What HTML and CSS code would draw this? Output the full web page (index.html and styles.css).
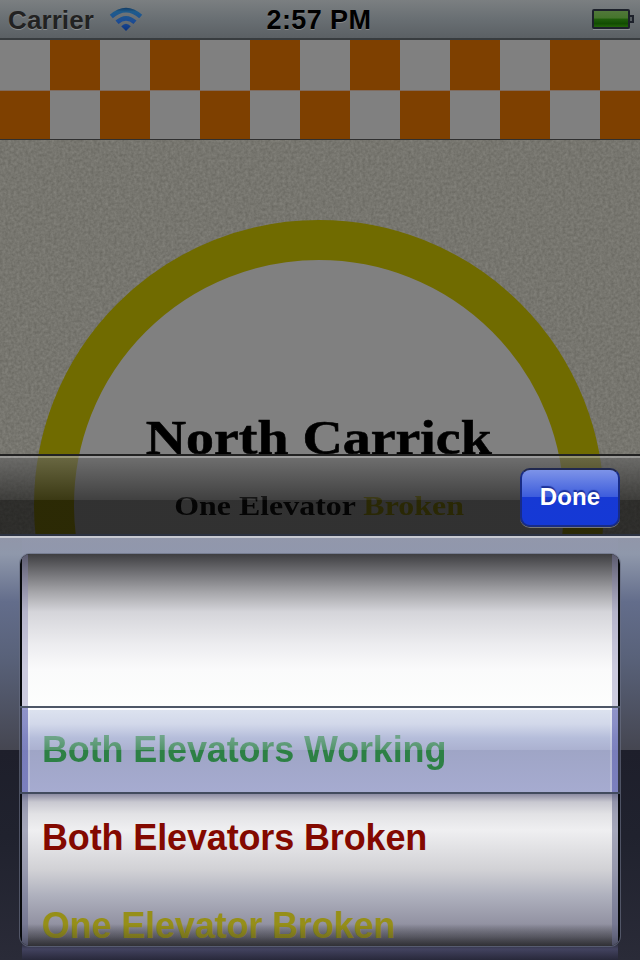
FILE: index.html
```html
<!DOCTYPE html>
<html lang="en">
<head>
<meta charset="utf-8">
<title>North Carrick</title>
<link rel="stylesheet" href="styles.css">
</head>
<body>
<main class="phone">
  <header class="status">
    <div class="carrier"><span class="carrier-name">Carrier</span>
      <svg class="wifi" width="34" height="26" viewBox="0 0 34 26">
        <defs><linearGradient id="wf" x1="0" y1="0" x2="0" y2="26" gradientUnits="userSpaceOnUse"><stop offset="0" stop-color="#0c2c52"/><stop offset=".22" stop-color="#1f5c8c"/><stop offset=".6" stop-color="#1c4c94"/><stop offset="1" stop-color="#092f7c"/></linearGradient></defs>
        <g fill="none" stroke="url(#wf)" stroke-width="4.6"><path d="M2.3 10.5Q17 -2.3 31.7 10.5"/><path d="M8 16.3Q17 8.3 26 16.3"/></g>
        <path d="M12.2 20.2Q17 15.2 21.8 20.2L17 25Z" fill="url(#wf)"/>
      </svg>
    </div>
    <time class="clock">2:57 PM</time>
    <svg class="battery" width="44" height="24" viewBox="0 0 44 24">
      <defs><linearGradient id="bt" x1="0" y1="0" x2="0" y2="1"><stop offset="0" stop-color="#53793c"/><stop offset=".45" stop-color="#45752c"/><stop offset=".5" stop-color="#205e0c"/><stop offset=".75" stop-color="#124d02"/><stop offset="1" stop-color="#286b0c"/></linearGradient></defs>
      <path d="M1 21.5H38" stroke="#8b8e92"/>
      <rect x="1" y="2" width="36" height="18" rx="1" fill="url(#bt)" stroke="#1d212b" stroke-width="2"/>
      <path d="M38 8H41V14H38" fill="#555b60" stroke="#1d212b" stroke-width="2"/>
    </svg>
  </header>
  <div class="checks"><div class="check-row"></div><div class="check-row odd"></div></div>
  <section class="scene">
    <svg class="grain" width="640" height="400"><filter id="noise" x="0" y="0" width="1" height="1" color-interpolation-filters="sRGB"><feTurbulence type="fractalNoise" baseFrequency=".35" numOctaves="2" seed="4"/><feColorMatrix values=".13 0 0 0 .4  .13 0 0 0 .396  .13 0 0 0 .369  0 0 0 0 1"/></filter><rect width="640" height="400" filter="url(#noise)"/></svg>
    <div class="disc">
      <h1 class="station"><span>North Carrick</span></h1>
      <p class="summary"><span>One Elevator <b>Broken</b></span></p>
    </div>
  </section>
  <section class="sheet">
    <div class="toolbar"><button class="done">Done</button></div>
    <div class="picker">
      <div class="wheel">
        <div class="space"></div>
        <div class="row working"><span>Both Elevators Working</span></div>
        <div class="lower">
          <div class="row broken"><span>Both Elevators Broken</span></div>
          <div class="row one"><span>One Elevator Broken</span></div>
        </div>
      </div>
    </div>
  </section>
</main>
</body>
</html>
```
FILE: styles.css
```css
* { box-sizing: border-box; }
body { margin: 0; background: #000; font-family: "Liberation Sans", Arial, sans-serif; font-weight: bold; }
.phone { position: relative; width: 640px; height: 960px; overflow: hidden; }
.status { display: grid; grid-template-columns: 1fr auto 1fr; height: 40px; padding: 0 6px 0 8px; background: linear-gradient(#7b7f81, #696f73 50%, #5b6064); border-bottom: 2px solid #383c3f; }
.carrier { display: flex; gap: 15px; color: #222; font-size: 26px; line-height: 41px; text-shadow: 0 1px #8b8e90; }
.carrier-name { width: 86px; letter-spacing: .1px; }
.wifi { margin-top: 6px; }
.clock { font-size: 27px; line-height: 40px; color: #000; width: 109px; white-space: nowrap; text-shadow: 0 1px #888; letter-spacing: .4px; }
.battery { justify-self: end; margin-top: 8px; margin-right: -2px; }
.checks { height: 100px; border-bottom: 1px solid #303030; background: #808080; }
.check-row { height: 51px; border-bottom: 1px solid #806b5d; background: repeating-linear-gradient(90deg, #808080 0 50px, #7e4000 50px 100px); }
.check-row.odd { height: 48px; border: 0; background: repeating-linear-gradient(90deg, #7e4000 0 50px, #808080 50px 100px); }
.scene { position: relative; height: 394px; overflow: hidden; background: #74736c; }
.grain { position: absolute; inset: 0; }
.disc { position: relative; width: 570px; height: 570px; margin: 80px 0 0 34px; padding-top: 144px; border: 40px solid #706b00; border-radius: 50%; background: #808080; font-family: "Liberation Serif", serif; color: #000; }
.station { margin: 0; height: 66px; font-size: 49px; line-height: 67px; display: flex; justify-content: center; white-space: nowrap; }
.station span { transform: scaleX(1.14); -webkit-text-stroke: .6px #000; }
.summary { margin: 18px 0 0; height: 36px; font-size: 28px; line-height: 36px; display: flex; justify-content: center; white-space: nowrap; }
.summary span { transform: scaleX(1.14); }
.summary b { color: #6a6500; }
.sheet { position: absolute; left: 0; right: 0; bottom: 0; height: 506px; }
.toolbar { display: flex; justify-content: flex-end; height: 82px; padding: 12px 20px 0; border-top: 2px solid #222; border-bottom: 2px solid #2d3342; background: linear-gradient(rgba(170,170,170,.65) 0 2px, rgba(100,100,100,.65) 2px, rgba(30,30,30,.65) 44px, rgba(7,7,7,.65) 44px); }
.done { width: 100px; height: 59px; padding: 0 0 2px; border: 2px solid #182c86; border-top-color: #20284f; border-radius: 10px; background: linear-gradient(#7d93e8, #3c5cdc 49%, #1639d4 50%, #1539d6); box-shadow: 0 1px #777; color: #fff; font: bold 24px/52px "Liberation Sans", Arial, sans-serif; text-shadow: 0 -2px 1px #1c329b; letter-spacing: .1px; }
.picker { position: relative; height: 424px; padding: 18px 20px 14px; background: linear-gradient(#c8cad2 0 2px, #9196a9 2px, #8f98ab 18px, #636d8b 66px, #59627a 120px, #454651 214px, #1e1f2b 214px, #20222e 300px, #2a2b38); }
.picker::before { content: ""; position: absolute; inset: 2px 22px 0; background: linear-gradient(rgba(146,152,172,.7), rgba(145,150,174,.6) 20px, transparent 60px, transparent 405px, rgba(73,73,106,.8) 411px, rgba(38,38,60,.5)); }
.wheel { position: relative; height: 392px; border-radius: 10px; overflow: hidden; background: #080a0d; box-shadow: 0 0 0 1px rgba(105,110,130,.65); }
.space { height: 152px; margin: 0 2px; border: solid rgba(132,130,178,.4); border-width: 0 6px; background: linear-gradient(#3e3e41, #6f6f73 18px, #a5a5a9 38px, #d5d5da 58px, #ececef 90px, #fafafb 115px, #fdfefd) border-box; }
.row { height: 88px; padding-left: 14px; font-size: 36px; line-height: 87px; white-space: nowrap; letter-spacing: -.14px; }
.working { position: relative; padding: 0 0 0 22px; border-top: 2px solid #4d5767; border-bottom: 2px solid #424b5e; line-height: 84px; background: linear-gradient(90deg, #353947 0 2px, rgba(100,104,180,.65) 2px 8px, rgba(255,255,255,.2) 8px 10px, transparent 10px 590px, rgba(255,255,255,.2) 590px 592px, rgba(100,104,180,.65) 592px 598px, #353947 598px), linear-gradient(#fbfcff 0 2px, #dce2ef 2px, #d2d8ea 16px, #b5bdda 30px, #abb1d0 42px, #9fa5c6 42px, #a6abd0); }
.working span { display: inline-block; height: 84px; line-height: 83px; color: transparent; background: linear-gradient(#70a58b 28px, #519469 42px, #2d8045 42px); -webkit-background-clip: text; background-clip: text; }
.lower { position: relative; height: 152px; margin: 0 2px; overflow: hidden; border: solid rgba(91,95,132,.5); border-width: 0 6px; background: linear-gradient(#8d8ca2, #c8c8d0 8px, #e2e2e5 20px, #efeff1 36px, #d1d1d5 76px, #aeb0bd 102px, #9292a2 130px, #676773 143px, #38383d) border-box; }
.broken { color: #830900; }
.one { color: #968f18; }
.one::after { content: ""; position: absolute; left: 0; right: 0; bottom: 0; height: 22px; background: linear-gradient(rgba(40,40,50,0), rgba(40,40,45,.45)); }
```
